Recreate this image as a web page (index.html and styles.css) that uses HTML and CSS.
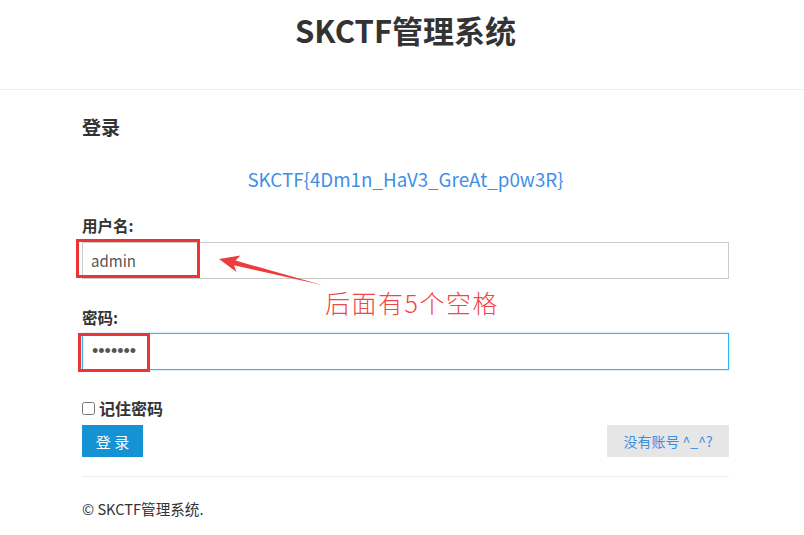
FILE: index.html
```html
<!DOCTYPE html>
<html lang="zh-CN">
<head>
<meta charset="utf-8">
<title>SKCTF管理系统</title>
<link rel="stylesheet" href="styles.css">
</head>
<body>
<header class="site-header">
  <div class="wrap">
    <h1 class="site-title">SKCTF管理系统</h1>
  </div>
</header>
<main class="wrap">
  <h2 class="panel-title">登录</h2>
  <p class="flag">SKCTF{4Dm1n_HaV3_GreAt_p0w3R}</p>
  <form class="login-form">
    <label class="field-label" for="u">用户名:</label>
    <input class="field field-user" id="u" type="text" value="admin">
    <label class="field-label label-pass" for="p">密码:</label>
    <input class="field field-pass" id="p" type="password" value="1234567">
    <div class="remember"><input type="checkbox" class="check" id="r"><label for="r">记住密码</label></div>
    <div class="actions">
      <button type="button" class="btn-login">登 录</button>
      <button type="button" class="btn-reg">没有账号 ^_^?</button>
    </div>
  </form>
  <hr class="rule">
  <footer class="footer">© SKCTF管理系统.</footer>
</main>

<div class="mark mark-user"></div>
<div class="mark mark-pass"></div>
<svg class="arrow" width="804" height="535" viewBox="0 0 804 535">
  <polygon points="219,259 240.5,255.5 235.5,260.6 322,285 234,265.2 236.5,272" fill="#ee3b3b"/>
</svg>
<div class="note">后面有5个空格</div>
</body>
</html>
```
FILE: styles.css
```css
* { box-sizing: border-box; }
html, body { margin: 0; padding: 0; background: #fff; }
body {
  position: relative;
  width: 804px;
  height: 535px;
  overflow: hidden;
  font-family: "Noto Sans CJK SC", "Noto Sans", sans-serif;
  color: #333;
}
.wrap { width: 647px; margin-left: 82px; }
.site-header { height: 90px; border-bottom: 1px solid #eeeeee; }
.site-title {
  margin: 0;
  padding-top: 8px;
  font-size: 31px;
  line-height: 44px;
  font-weight: 700;
  text-align: center;
  color: #333;
}
.panel-title {
  margin: 25px 0 0;
  font-size: 19px;
  line-height: 24px;
  font-weight: 700;
}
.flag {
  margin: 28px 0 0;
  font-size: 18.8px;
  line-height: 24px;
  text-align: center;
  color: #3f8fe8;
}
.login-form { display: flex; flex-direction: column; }
.field-label {
  margin-top: 24px;
  font-size: 15.5px;
  line-height: 20px;
  font-weight: 700;
  color: #333;
}
.label-pass { margin-top: 28px; }
.field {
  margin-top: 7px;
  height: 37px;
  width: 647px;
  padding: 0 8px;
  border: 1px solid #cccccc;
  font-family: "Noto Sans CJK SC", "Noto Sans", sans-serif;
  font-size: 15px;
  color: #555;
  outline: none;
  background: #fff;
}
.field-pass {
  margin-top: 6px;
  padding-left: 9px;
  border-color: #2fb5f2;
  box-shadow: 0 0 2px rgba(47, 181, 242, 0.5);
  font-family: "Liberation Sans", Arial, sans-serif;
  font-size: 18px;
}
.remember {
  margin-top: 28px;
  display: flex;
  align-items: center;
  font-size: 16px;
  line-height: 20px;
  font-weight: 700;
  color: #333;
}
.check { margin: 0 4px 0 0; width: 13px; height: 13px; }
.actions { margin-top: 7px; display: flex; justify-content: space-between; }
.btn-login {
  width: 61px;
  height: 32px;
  border: 0;
  background: #1592d4;
  color: #fff;
  font-family: "Noto Sans CJK SC", sans-serif;
  font-size: 15px;
  padding: 0;
}
.btn-reg {
  width: 122px;
  height: 32px;
  border: 0;
  background: #e6e6e6;
  color: #3a8ee0;
  font-family: "Noto Sans CJK SC", sans-serif;
  font-size: 14px;
  padding: 0;
}
.rule { margin: 19px 0 0; border: 0; border-top: 1px solid #eeeeee; height: 0; }
.footer {
  margin-top: 22px;
  font-size: 14.6px;
  line-height: 20px;
  color: #333;
}
.mark { position: absolute; border: 3px solid #ee3333; }
.mark-user { left: 76px; top: 239px; width: 124px; height: 39px; }
.mark-pass { left: 78px; top: 333px; width: 72px; height: 39px; }
.arrow { position: absolute; left: 0; top: 0; pointer-events: none; }
.note {
  position: absolute;
  left: 325px;
  top: 285px;
  font-size: 25px;
  line-height: 34px;
  letter-spacing: 1.5px;
  color: #f04646;
  font-weight: 300;
  white-space: nowrap;
}
```
